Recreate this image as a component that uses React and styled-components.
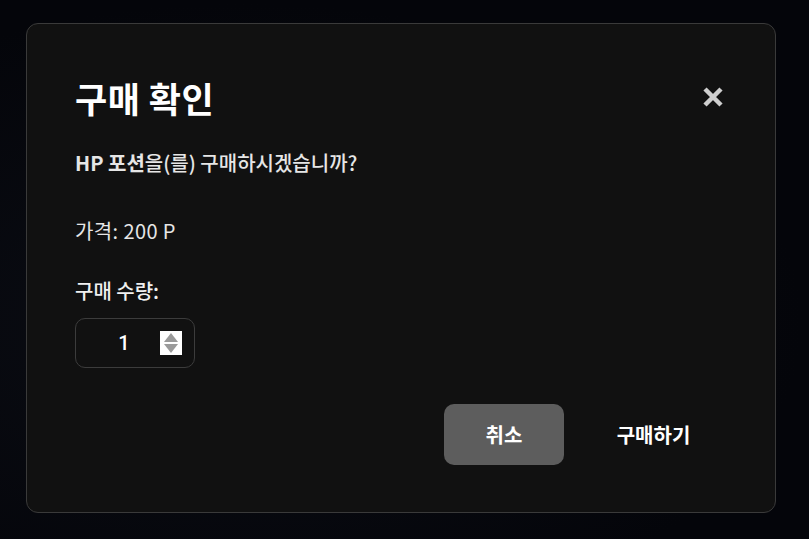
import React, { useState } from 'react';
import styled, { createGlobalStyle } from 'styled-components';

const GlobalStyle = createGlobalStyle`
  html, body {
    margin: 0;
    padding: 0;
    background: #05060a;
    font-family: 'Noto Sans CJK KR', 'Noto Sans', sans-serif;
  }
`;

const Backdrop = styled.div`
  width: 809px;
  height: 539px;
  box-sizing: border-box;
  padding: 23px 33px 26px 26px;
  background: radial-gradient(ellipse at 30% 60%, #0b0d14 0%, #04050a 70%);
`;

const Dialog = styled.div`
  height: 100%;
  box-sizing: border-box;
  background: #111111;
  border: 1px solid #3a3a3a;
  border-radius: 12px;
  padding: 48px 48px 0 48px;
  color: #ececec;
  display: flex;
  flex-direction: column;
`;

const Header = styled.div`
  display: flex;
  justify-content: space-between;
  align-items: center;
  height: 50px;
`;

const Title = styled.h1`
  margin: 0;
  font-size: 35px;
  font-weight: 700;
  color: #ffffff;
  letter-spacing: 0.5px;
`;

const CloseButton = styled.button`
  border: none;
  background: none;
  padding: 0;
  margin-right: 1px;
  width: 26px;
  height: 26px;
  display: flex;
  align-items: center;
  justify-content: center;
  cursor: pointer;
`;

const Question = styled.p`
  margin: 26px 0 0;
  font-size: 20px;
  font-weight: 500;
  color: #e6e6e6;
`;

const Strong = styled.strong`
  font-weight: 700;
`;

const Price = styled.p`
  margin: 39px 0 0;
  font-size: 20px;
  font-weight: 400;
  color: #e6e6e6;
  letter-spacing: 0.4px;
`;

const Label = styled.label`
  display: block;
  margin-top: 31px;
  font-size: 20px;
  font-weight: 500;
  color: #f0f0f0;
`;

const QtyBox = styled.div`
  margin-top: 13px;
  width: 120px;
  height: 50px;
  box-sizing: border-box;
  border: 1px solid #3c3c3c;
  border-radius: 10px;
  display: flex;
  align-items: center;
  padding-left: 40px;
  gap: 28px;
`;

const QtyValue = styled.span`
  font-family: 'Roboto', 'Noto Sans', sans-serif;
  font-size: 20px;
  font-weight: 500;
  color: #ffffff;
  width: 16px;
  text-align: center;
`;

const Spinner = styled.div`
  width: 22px;
  height: 24px;
  background: #ffffff;
  display: flex;
  flex-direction: column;
  align-items: center;
  justify-content: center;
  gap: 2px;
`;

const Actions = styled.div`
  margin-top: 36px;
  display: flex;
  justify-content: flex-end;
  align-items: center;
  gap: 16px;
`;

const CancelButton = styled.button`
  width: 120px;
  height: 61px;
  border: none;
  border-radius: 10px;
  background: #5d5d5d;
  color: #ffffff;
  font-family: inherit;
  font-size: 20px;
  font-weight: 700;
  cursor: pointer;
`;

const BuyButton = styled.button`
  width: 147px;
  height: 61px;
  border: none;
  background: none;
  color: #ffffff;
  font-family: inherit;
  font-size: 20px;
  font-weight: 700;
  cursor: pointer;
`;

const Triangle = ({ up }) => (
  <svg width="14" height="9" viewBox="0 0 14 9">
    <path d={up ? 'M7 0 L14 9 L0 9 Z' : 'M0 0 L14 0 L7 9 Z'} fill="#9a9a9a" />
  </svg>
);

const App = () => {
  const [qty] = useState(1);

  return (
    <>
      <GlobalStyle />
      <Backdrop>
        <Dialog>
          <Header>
            <Title>구매 확인</Title>
            <CloseButton type="button" aria-label="닫기">
              <svg width="22" height="22" viewBox="0 0 22 22">
                <path d="M3 3 L19 19 M19 3 L3 19" stroke="#cfcfcf" strokeWidth="4.5" strokeLinecap="butt" />
              </svg>
            </CloseButton>
          </Header>

          <Question>
            <Strong>HP 포션</Strong>을(를) 구매하시겠습니까?
          </Question>

          <Price>가격: 200 P</Price>

          <Label htmlFor="qty">구매 수량:</Label>
          <QtyBox id="qty">
            <QtyValue>{qty}</QtyValue>
            <Spinner>
              <Triangle up />
              <Triangle />
            </Spinner>
          </QtyBox>

          <Actions>
            <CancelButton type="button">취소</CancelButton>
            <BuyButton type="button">구매하기</BuyButton>
          </Actions>
        </Dialog>
      </Backdrop>
    </>
  );
};

export default App;
